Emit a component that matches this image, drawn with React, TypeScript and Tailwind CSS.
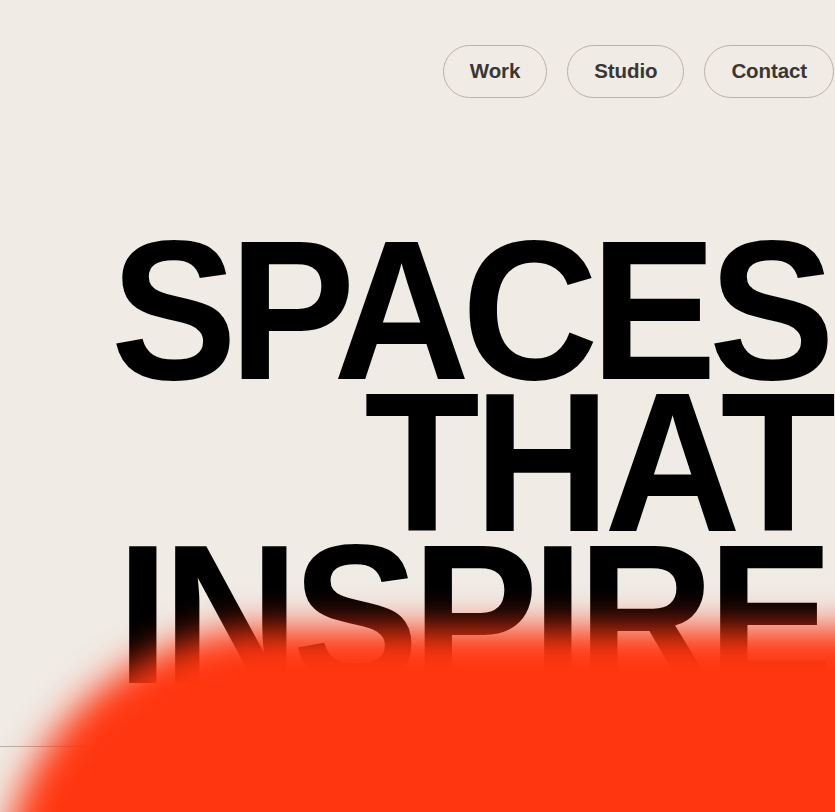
const navItems = ["Work", "Studio", "Contact"];

export default function App() {
  return (
    <div className="relative h-[812px] overflow-hidden bg-[#f0ebe5] text-black [font-family:'Liberation_Sans',Arial,sans-serif]">
      <nav className="flex justify-end gap-[20px] pr-[1px] pt-[45px]">
        {navItems.map((item) => (
          <a
            key={item}
            href="#"
            className="flex h-[53px] items-center rounded-full border border-[#b9b2aa] px-[26px] text-[20.5px] font-bold tracking-[-0.005em] text-[#3a3733]"
          >
            {item}
          </a>
        ))}
      </nav>

      <h1 className="mr-[8px] mt-[137px] text-right text-[198px] font-bold uppercase leading-[152px] tracking-[-8.4px]">
        <div className="origin-right scale-x-[0.956] whitespace-nowrap">Spaces</div>
        <div className="mr-[-3px] origin-right scale-x-[0.956] whitespace-nowrap tracking-[-6.5px]">That</div>
        <div className="origin-right scale-x-[0.956] whitespace-nowrap tracking-[-7px]">Inspire</div>
      </h1>

      <div className="mt-[55px] border-t border-[#b9b2aa]" />

      {/* blurred orange glow over the bottom of the page */}
      <div className="pointer-events-none absolute left-0 top-[628px] h-[600px] w-[1300px] rounded-tl-[271px] bg-[#ff3610] blur-[18px]" />
    </div>
  );
}
